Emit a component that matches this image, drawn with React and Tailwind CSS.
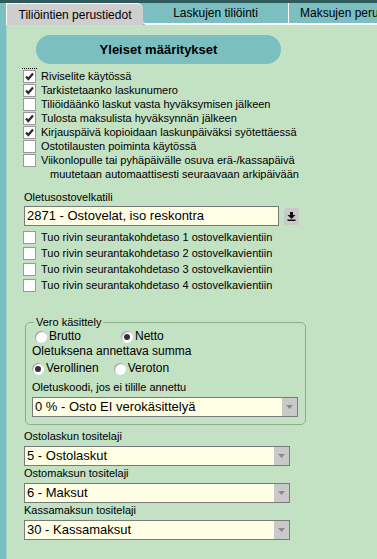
import React from 'react';

const font = { fontFamily: '"Liberation Sans", Arial, sans-serif' };

function Check({ checked, focus }) {
  return (
    <span className="relative mt-[1px] flex h-[13px] w-[13px] shrink-0 items-center justify-center border border-[#9a9a9a] bg-white">
      {focus && <span className="absolute -left-[2px] -top-[3px] h-[2px] w-[15px] border-t border-dotted border-black" />}
      {checked && (
        <svg width="11" height="11" viewBox="0 0 11 11">
          <path d="M2 5.5 L4.3 8 L9 2.5" fill="none" stroke="#2a2a2a" strokeWidth="2.2" />
        </svg>
      )}
    </span>
  );
}

function CheckRow({ checked, focus, children }) {
  return (
    <div className="flex items-start gap-[5px]">
      <Check checked={checked} focus={focus} />
      <span className="leading-[14px]">{children}</span>
    </div>
  );
}

function Radio({ checked, label }) {
  return (
    <div className="flex items-center gap-[2px]">
      <span className="flex h-[12px] w-[12px] items-center justify-center rounded-full bg-white shadow-[inset_1px_1px_1px_#9a9a9a]">
        {checked && <span className="h-[6px] w-[6px] rounded-full bg-[#333]" />}
      </span>
      <span>{label}</span>
    </div>
  );
}

function Select({ value }) {
  return (
    <div className="flex h-[20px] w-[266px] items-center border border-[#7a7a7a] bg-[#ffffe6] pl-[2px] text-[13px]">
      <span className="flex-1 leading-[18px]">{value}</span>
      <span className="flex h-full w-[15px] items-center justify-center bg-[#c9c9c9]">
        <svg width="7" height="4" viewBox="0 0 7 4"><path d="M0 0 H7 L3.5 4 Z" fill="#8a8a8a" /></svg>
      </span>
    </div>
  );
}

export default function App() {
  return (
    <div className="h-[559px] w-[377px] overflow-hidden bg-[#7bbfc1] text-[11px] text-black" style={font}>
      <div className="h-[3px] bg-[#2f5a5c]" />
      <div className="flex h-[22px] pl-[6px]">
        <div className="flex w-[137px] items-center justify-center rounded-tr-[6px] border-l border-t border-white bg-[#cecece] text-[12px]">
          Tiliöintien perustiedot
        </div>
        <div className="flex w-[145px] items-center justify-center rounded-bl-[4px] border-b-2 border-white text-[12px]">
          Laskujen tiliöinti
        </div>
        <div className="flex min-w-0 flex-1 items-center overflow-hidden whitespace-nowrap border-b-2 border-l border-white pl-[11px] text-[12px]">
          Maksujen perustiedot
        </div>
      </div>
      <div className="ml-[6px] h-[534px] border-l border-[#a6d4cc] bg-[#c3e1c3] pt-[10px]">
        <div className="ml-[29px] flex h-[29px] w-[245px] items-center justify-center rounded-full bg-[#7bbfc1] text-[13px] font-bold">
          Yleiset määritykset
        </div>
        <div className="ml-[16px] mt-[5px] flex flex-col">
          <CheckRow checked focus>Riviselite käytössä</CheckRow>
          <CheckRow checked>Tarkistetaanko laskunumero</CheckRow>
          <CheckRow>Tiliöidäänkö laskut vasta hyväksymisen jälkeen</CheckRow>
          <CheckRow checked>Tulosta maksulista hyväksynnän jälkeen</CheckRow>
          <CheckRow checked>Kirjauspäivä kopioidaan laskunpäiväksi syötettäessä</CheckRow>
          <CheckRow>Ostotilausten poiminta käytössä</CheckRow>
          <CheckRow>Viikonlopulle tai pyhäpäivälle osuva erä-/kassapäivä</CheckRow>
          <div className="pl-[27px] leading-[15px]">muutetaan automaattisesti seuraavaan arkipäivään</div>
        </div>
        <div className="ml-[17px] mt-[9px] leading-[13px]">Oletusostovelkatili</div>
        <div className="ml-[17px] mt-[2px] flex items-center gap-[5px]">
          <div className="flex h-[20px] w-[255px] items-center border border-[#7a7a7a] bg-[#ffffe6] pl-[2px] text-[13px]">
            2871 - Ostovelat, iso reskontra
          </div>
          <span className="flex h-[17px] w-[15px] items-center justify-center rounded-[2px] bg-[#c9c9c9]">
            <svg width="9" height="9" viewBox="0 0 9 9">
              <path d="M3 0 H6 V3 H8.5 L4.5 7 L0.5 3 H3 Z" fill="#111" />
              <rect x="0.5" y="7.5" width="8" height="1.5" fill="#111" />
            </svg>
          </span>
        </div>
        <div className="ml-[16px] mt-[4px] flex flex-col gap-[2px]">
          <CheckRow>Tuo rivin seurantakohdetaso 1 ostovelkavientiin</CheckRow>
          <CheckRow>Tuo rivin seurantakohdetaso 2 ostovelkavientiin</CheckRow>
          <CheckRow>Tuo rivin seurantakohdetaso 3 ostovelkavientiin</CheckRow>
          <CheckRow>Tuo rivin seurantakohdetaso 4 ostovelkavientiin</CheckRow>
        </div>
        <fieldset className="ml-[18px] mt-[24px] w-[281px] rounded-[5px] border border-[#8ab08a] px-[6px] pb-[7px] pt-0">
          <legend className="ml-[2px] px-[2px] leading-[12px]">Vero käsittely</legend>
          <div className="mt-[1px] flex gap-[40px] pl-[3px] text-[12px] leading-[15px]">
            <Radio label="Brutto" />
            <Radio checked label="Netto" />
          </div>
          <div className="text-[12px] leading-[14px]">Oletuksena annettava summa</div>
          <div className="mt-[3px] flex gap-[15px] text-[12px] leading-[15px]">
            <Radio checked label="Verollinen" />
            <Radio label="Veroton" />
          </div>
          <div className="mt-[5px] leading-[13px]">Oletuskoodi, jos ei tilille annettu</div>
          <div className="mt-[3px]">
            <Select value="0 % - Osto EI verokäsittelyä" />
          </div>
        </fieldset>
        <div className="ml-[17px] mt-[5px] leading-[13px]">Ostolaskun tositelaji</div>
        <div className="ml-[17px] mt-[3px]"><Select value="5 - Ostolaskut" /></div>
        <div className="ml-[17px] mt-[1px] leading-[13px]">Ostomaksun tositelaji</div>
        <div className="ml-[17px] mt-[3px]"><Select value="6 - Maksut" /></div>
        <div className="ml-[17px] mt-[1px] leading-[13px]">Kassamaksun tositelaji</div>
        <div className="ml-[17px] mt-[3px]"><Select value="30 - Kassamaksut" /></div>
      </div>
    </div>
  );
}
